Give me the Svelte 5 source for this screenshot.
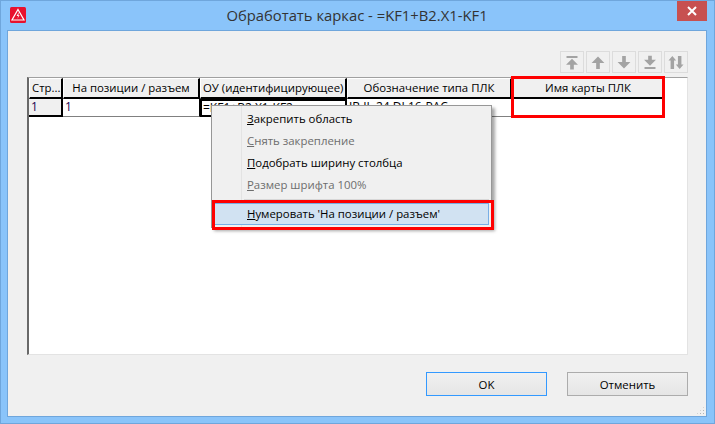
<script>
  const columns = [
    { title: "Стр...", align: "left" },
    { title: "На позиции / разъем" },
    { title: "ОУ (идентифицирующее)", align: "left" },
    { title: "Обозначение типа ПЛК" },
    { title: "Имя карты ПЛК" },
  ];

  const menu = [
    { key: "З", rest: "акрепить область" },
    { key: "С", rest: "нять закрепление", disabled: true },
    { key: "П", rest: "одобрать ширину столбца" },
    { key: "Р", rest: "азмер шрифта 100%", disabled: true },
    { separator: true },
    { key: "Н", rest: "умеровать 'На позиции / разъем'", active: true },
  ];

  // shapes of the move-row buttons, 24x21 box
  const tools = [
    "M6 3.500h12v2H6zM12 6.500l6.500 6.500H14v5h-4v-5H5.500z",
    "M12 4l7 7h-5v6.500h-4V11H5z",
    "M10 3.500h4V10h5l-7 7-7-7h5z",
    "M10 3h4v4.500h4.500L12 14 5.500 7.500H10zM6 15.500h12v2H6z",
    "M8 3.500l4.200 4.700H9.900v9.300H6.100V8.200H3.800zM14.100 3.500h3.800v9.300h2.300L16 17.500l-4.200-4.700h2.300z",
  ];
</script>

<div class="window">
  <header class="titlebar">
    <svg class="logo" width="16" height="16" viewBox="0 0 16 16">
      <rect width="16" height="16" rx="1.500" fill="#e8112d" />
      <path d="M8 2.500L14 13H2z" fill="none" stroke="#fff" stroke-width="1.200" />
      <path d="M8.800 5L6.600 9h1.800l-1.200 3 2.400-3.800H8.300z" fill="#fff" />
    </svg>
    <span class="title">Обработать каркас - =KF1+B2.X1-KF1</span>
    <button class="close" aria-label="Закрыть">
      <svg width="10" height="10" viewBox="0 0 10 10">
        <path d="M1 1l8 8M9 1l-8 8" stroke="#fff" stroke-width="2" />
      </svg>
    </button>
  </header>

  <main class="client">
    <div class="toolbar">
      {#each tools as d}
        <div class="tool">
          <svg width="24" height="21" viewBox="0 0 24 21"><path {d} fill="#a3a3a3" /></svg>
        </div>
      {/each}
    </div>

    <div class="table">
      <div class="grid">
        {#each columns as col}
          <div class="head" class:left={col.align === "left"}>{col.title}</div>
        {/each}
        <div class="cell rowhead">1</div>
        <div class="cell">1</div>
        <div class="cell current">=KF1+B2.X1-KF2</div>
        <div class="cell plain">IB IL 24 DI 16-PAC</div>
        <div class="cell plain"></div>
      </div>
    </div>

    <footer class="actions">
      <button class="btn default">OK</button>
      <button class="btn">Отменить</button>
    </footer>
    <div class="grip"></div>
  </main>

  <div class="menu">
    {#each menu as item}
      {#if item.separator}
        <div class="sep"></div>
      {:else}
        <div class="item" class:disabled={item.disabled} class:active={item.active}>
          <u>{item.key}</u>{item.rest}
        </div>
      {/if}
    {/each}
  </div>

  <div class="mark mark-col"></div>
  <div class="mark mark-item"></div>
</div>

<style>
  :global(body) {
    margin: 0;
  }

  .window {
    position: relative;
    box-sizing: border-box;
    width: 715px;
    height: 424px;
    display: flex;
    flex-direction: column;
    overflow: hidden;
    background: #8ac4fa;
    border: 1px solid #6fa6dc;
    font-family: "Open Sans", "Noto Sans", sans-serif;
    font-size: 11.4px;
    color: #000;
  }

  .titlebar {
    height: 29px;
    flex: none;
    display: flex;
    align-items: flex-start;
    position: relative;
    justify-content: center;
  }

  .logo {
    position: absolute;
    left: 9px;
    top: 6px;
  }

  .title {
    font-size: 14.8px;
    line-height: 28px;
    color: #333;
    margin-left: -1px;
  }

  .close {
    position: absolute;
    right: 7px;
    top: 0;
    width: 30px;
    height: 20px;
    padding: 0;
    border: 0;
    background: #c75050;
    display: flex;
    align-items: center;
    justify-content: center;
  }

  .client {
    position: relative;
    flex: 1;
    margin: 0 7px 7px 6px;
    padding: 20px 18px 20px 19px;
    display: flex;
    flex-direction: column;
    background: #f0f0f0;
    border: 1px solid #6fa6dc;
  }

  .toolbar {
    display: flex;
    justify-content: flex-end;
    gap: 2px;
    height: 22px;
    margin-bottom: 4px;
  }

  .tool {
    box-sizing: border-box;
    width: 24px;
    height: 22px;
    border: 1px solid #dcdcdc;
    display: flex;
    align-items: center;
    justify-content: center;
  }

  .table {
    flex: none;
    box-sizing: border-box;
    height: 278px;
    background: #fff;
    border-style: solid;
    border-color: #a0a0a0 #e3e3e3 #e3e3e3 #696969;
    border-width: 1px 1px 1px 2px;
  }

  .grid {
    display: grid;
    grid-template-columns: 34px 137px 147px 165px 153px;
    grid-template-rows: 21px 18px;
  }

  .head {
    box-sizing: border-box;
    background: #f0f0f0;
    border: 1px solid #000;
    border-width: 0 2px 2px 0;
    border-left: 1px solid #fff;
    border-top: 1px solid #fff;
    text-align: center;
    line-height: 17px;
    white-space: nowrap;
    overflow: hidden;
  }

  .head.left {
    text-align: left;
    padding-left: 2px;
  }

  .cell {
    box-sizing: border-box;
    padding-left: 2px;
    font-size: 12px;
    line-height: 16px;
    color: #1c0050;
    border-right: 1px solid #000;
    border-bottom: 1px solid #808080;
    white-space: nowrap;
    overflow: hidden;
  }

  .rowhead {
    background: #f0f0f0;
    border-right: 2px solid #000;
    border-bottom: 2px solid #000;
  }

  .current {
    border: 2px solid #000;
    padding-left: 1px;
    color: #000;
    line-height: 14px;
  }

  .plain {
    color: #000;
    border-right: 0;
  }

  .actions {
    display: flex;
    justify-content: flex-end;
    gap: 20px;
    margin-top: 17px;
  }

  .btn {
    box-sizing: border-box;
    width: 121px;
    height: 24px;
    padding: 0;
    border: 1px solid #acacac;
    background: linear-gradient(#f0f0f0, #e5e5e5);
    font: inherit;
    color: #000;
  }

  .btn.default {
    border: 1px solid #3399ff;
  }

  .grip {
    position: absolute;
    right: 1px;
    bottom: 1px;
    width: 9px;
    height: 9px;
    background: radial-gradient(circle, #b5b5b5 1px, transparent 1px) 0 0 / 3px 3px;
    clip-path: polygon(100% 0, 100% 100%, 0 100%);
  }

  .menu {
    position: absolute;
    left: 210px;
    top: 104px;
    box-sizing: border-box;
    width: 281px;
    height: 123px;
    padding: 2px;
    background: linear-gradient(to right, #f0f0f0 29px, #e3e3e3 29px, #e3e3e3 30px, #f0f0f0 30px);
    border: 1px solid #979797;
    box-shadow: 3px 3px 3px rgba(0, 0, 0, 0.35);
  }

  .item {
    height: 22px;
    box-sizing: border-box;
    padding-left: 33px;
    line-height: 22px;
    white-space: nowrap;
  }

  .item.disabled {
    color: #6d6d6d;
  }

  .item.active {
    background: #d1e2f2;
    border: 1px solid #78aee5;
    padding-left: 32px;
    line-height: 20px;
  }

  .sep {
    height: 1px;
    margin: 3px 0 3px 30px;
    background: #d7d7d7;
  }

  .mark {
    position: absolute;
    box-sizing: border-box;
    border: 3px solid #fe0000;
    pointer-events: none;
  }

  .mark-col {
    left: 510px;
    top: 75px;
    width: 154px;
    height: 42px;
  }

  .mark-item {
    left: 211px;
    top: 199px;
    width: 282px;
    height: 30px;
  }
</style>
